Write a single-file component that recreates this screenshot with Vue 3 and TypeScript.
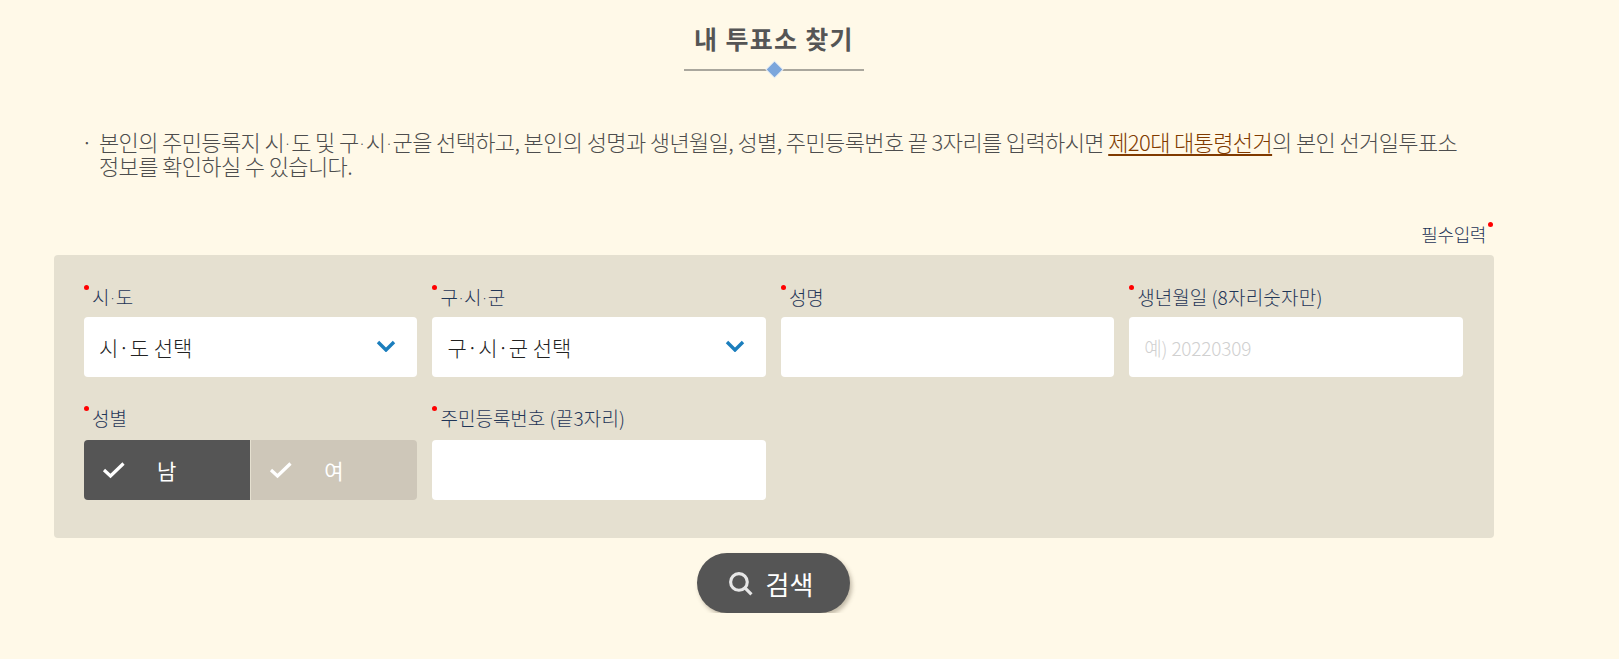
<script setup lang="ts">
import { ref } from 'vue'

const gender = ref('m')
const sido = ref('')
const gugun = ref('')
const name = ref('')
const birth = ref('')
const rrn = ref('')
</script>

<template>
  <div class="page">
    <h2 class="title">내 투표소 찾기</h2>
    <div class="divider"><span class="diamond"></span></div>

    <p class="intro">
      <span class="bullet">·</span>
      <span>본인의 주민등록지 시<i class="dot">·</i>도 및 구<i class="dot">·</i>시<i class="dot">·</i>군을 선택하고, 본인의 성명과 생년월일, 성별, 주민등록번호 끝 3자리를 입력하시면 <a class="link" href="#">제20대 대통령선거</a>의 본인 선거일투표소<br />정보를 확인하실 수 있습니다.</span>
    </p>

    <div class="required-row"><span class="req required-note">필수입력</span></div>

    <form class="panel" @submit.prevent>
      <div class="field">
        <label class="req label">시<i class="dot">·</i>도</label>
        <div class="select-wrap">
          <select v-model="sido"><option value="">시·도 선택</option></select>
          <svg class="chevron" width="20" height="12" viewBox="0 0 20 12"><path d="M2 2l8 8 8-8" fill="none" stroke="#1b7ebd" stroke-width="3.4"/></svg>
        </div>
      </div>
      <div class="field">
        <label class="req label">구<i class="dot">·</i>시<i class="dot">·</i>군</label>
        <div class="select-wrap">
          <select v-model="gugun"><option value="">구·시·군 선택</option></select>
          <svg class="chevron" width="20" height="12" viewBox="0 0 20 12"><path d="M2 2l8 8 8-8" fill="none" stroke="#1b7ebd" stroke-width="3.4"/></svg>
        </div>
      </div>
      <div class="field">
        <label class="req label">성명</label>
        <input v-model="name" type="text" />
      </div>
      <div class="field">
        <label class="req label">생년월일 <small>(8자리숫자만)</small></label>
        <input v-model="birth" type="text" placeholder="예) 20220309" />
      </div>
      <div class="field low">
        <label class="req label">성별</label>
        <div class="gender">
          <button type="button" :class="['g-btn', { on: gender === 'm' }]" @click="gender = 'm'">
            <svg width="24" height="18" viewBox="0 0 24 18"><path d="M2 9l6.5 6L21.500 2.500" fill="none" stroke="#fff" stroke-width="3.200"/></svg>
            <span>남</span>
          </button>
          <button type="button" :class="['g-btn', { on: gender === 'f' }]" @click="gender = 'f'">
            <svg width="24" height="18" viewBox="0 0 24 18"><path d="M2 9l6.5 6L21.500 2.500" fill="none" stroke="#fff" stroke-width="3.200"/></svg>
            <span>여</span>
          </button>
        </div>
      </div>
      <div class="field low">
        <label class="req label">주민등록번호 <small>(끝3자리)</small></label>
        <input v-model="rrn" type="text" />
      </div>
    </form>

    <div class="actions">
      <button class="search" type="button">
        <svg width="25" height="25" viewBox="0 0 24 24"><circle cx="10.500" cy="10.500" r="8" fill="none" stroke="#e6e6e6" stroke-width="3"/><path d="M16.500 16.500l6 6" stroke="#e6e6e6" stroke-width="3"/></svg>
        <span>검색</span>
      </button>
    </div>
  </div>
</template>

<style>
html, body {
  background: #fff9e8;
}
</style>

<style scoped>
.page {
  width: 1440px;
  margin-left: 54px;
  font-family: "Noto Sans CJK KR", "Noto Sans", sans-serif;
  color: #555;
}

.title {
  margin: 0;
  padding-top: 20px;
  text-align: center;
  font-size: 25px;
  line-height: 36px;
  font-weight: 700;
  letter-spacing: 1.3px;
  color: #555;
}

.divider {
  position: relative;
  width: 180px;
  height: 2px;
  margin: 13px auto 0;
  background: #aaa79d;
}

.diamond {
  position: absolute;
  left: 85px;
  top: -5px;
  width: 11px;
  height: 11px;
  background: #7ba6dc;
  box-shadow: 0 0 0 1px #e9eef2;
  transform: rotate(45deg);
}

.intro {
  display: flex;
  margin: 58px 0 0 27px;
  width: 1400px;
  height: 48px;
  font-size: 22px;
  line-height: 24px;
  letter-spacing: -0.62px;
  font-weight: 300;
  color: #4d4d4d;
}

.bullet {
  flex: none;
  width: 18px;
}

.dot {
  font-size: 0.6em;
  font-style: normal;
  line-height: 0;
  letter-spacing: 0;
  vertical-align: 0.15em;
}

.link {
  color: #803a00;
  text-decoration: underline;
  text-decoration-thickness: 2px;
  text-underline-offset: 3px;
}

.required-row {
  display: flex;
  justify-content: flex-end;
  margin-top: 39px;
  padding-right: 8px;
  height: 30px;
  align-items: flex-end;
}

.req {
  position: relative;
}

.req::before {
  content: "";
  position: absolute;
  width: 5px;
  height: 5px;
  border-radius: 50%;
  background: #f00;
}

.required-note {
  font-size: 18px;
  line-height: 24px;
  letter-spacing: -0.4px;
  font-weight: 300;
  color: #1f3557;
}

.required-note::before {
  right: -7px;
  top: 0;
}

.panel {
  display: grid;
  grid-template-columns: repeat(4, 333.4px);
  column-gap: 15.05px;
  row-gap: 28px;
  padding: 27px 30px 38px;
  margin-top: 9px;
  background: #e5e0d0;
  border-radius: 4px;
}

.label {
  display: block;
  height: 35px;
  padding-left: 8px;
  font-size: 19px;
  line-height: 30px;
  font-weight: 300;
  color: #1f3557;
}

.label::before {
  left: 0;
  top: 3px;
}

.label small {
  font-size: 19px;
  letter-spacing: 0.2px;
}

.low .label {
  line-height: 26px;
}

.low .label::before {
  top: 1px;
}

input,
select {
  display: block;
  box-sizing: border-box;
  width: 100%;
  height: 60px;
  padding: 0 15px;
  border: 0;
  border-radius: 4px;
  background: #fff;
  font-family: inherit;
  font-size: 21px;
  font-weight: 300;
  color: #222;
  outline: none;
  appearance: none;
}

input::placeholder {
  font-size: 19px;
  color: #d0d0d0;
  letter-spacing: -0.2px;
  opacity: 1;
}

.select-wrap {
  position: relative;
}

.chevron {
  position: absolute;
  right: 21px;
  top: 23px;
  pointer-events: none;
}

.gender {
  display: flex;
  gap: 1px;
  height: 60px;
}

.g-btn {
  display: flex;
  align-items: center;
  flex: 1;
  padding: 0 0 0 18px;
  border: 0;
  background: #cec7b9;
  color: #fff;
  font-family: inherit;
  font-size: 21px;
}

.g-btn:first-child {
  border-radius: 4px 0 0 4px;
}

.g-btn:last-child {
  border-radius: 0 4px 4px 0;
}

.g-btn span {
  margin-left: 31px;
}

.g-btn.on {
  background: #555;
}

.actions {
  display: flex;
  justify-content: center;
  margin-top: 15px;
}

.search {
  display: flex;
  align-items: center;
  justify-content: center;
  gap: 13px;
  width: 153px;
  height: 60px;
  padding: 0 6px 0 0;
  margin-right: 1px;
  border: 0;
  border-radius: 30px;
  background: #555;
  color: #fff;
  font-family: inherit;
  font-size: 26px;
  box-shadow: 2px 3px 4px rgba(80, 70, 50, 0.35);
}
</style>
